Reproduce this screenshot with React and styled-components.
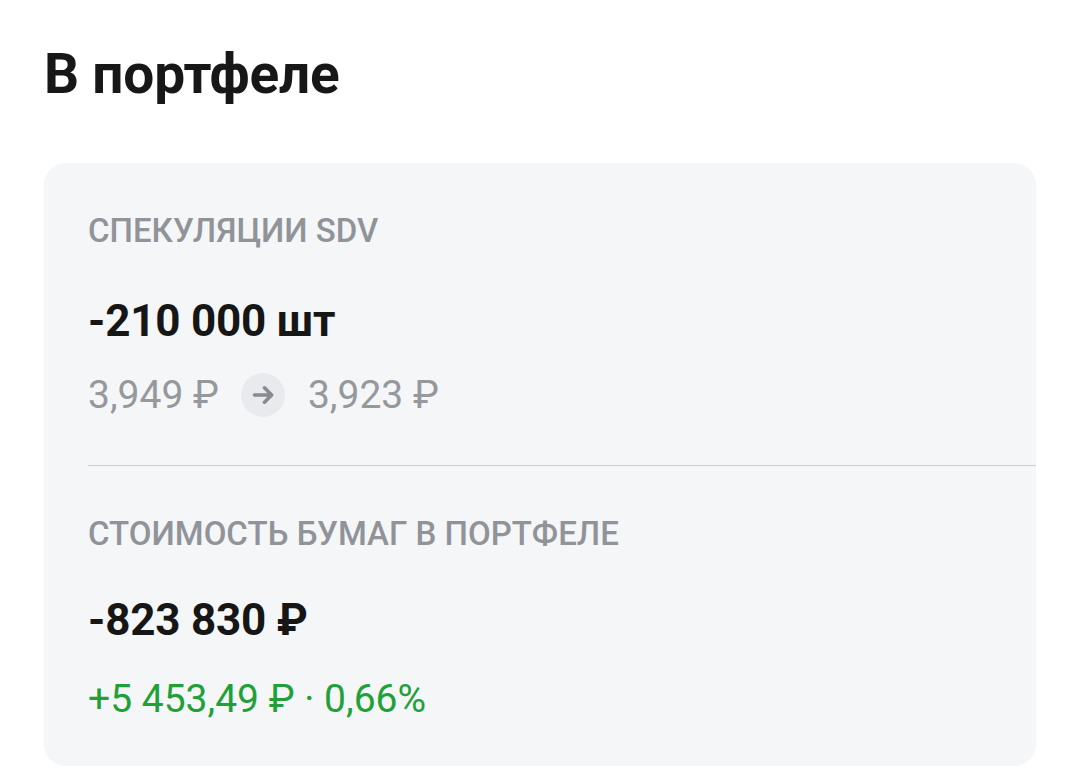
import React from "react";
import styled, { createGlobalStyle } from "styled-components";

const GlobalStyle = createGlobalStyle`
  html, body {
    margin: 0;
    padding: 0;
    background: #ffffff;
  }
  body {
    font-family: Roboto, "Noto Sans", "Liberation Sans", sans-serif;
    -webkit-font-smoothing: antialiased;
  }
`;

const Page = styled.div`
  width: 1080px;
  padding: 44px 44px 0 44px;
  box-sizing: border-box;
`;

const Title = styled.h1`
  margin: 0;
  font-size: 55px;
  line-height: 60px;
  font-weight: 700;
  color: #171717;
  letter-spacing: -0.2px;
`;

const Card = styled.section`
  margin-top: 59px;
  width: 992px;
  box-sizing: border-box;
  background: #f5f6f8;
  border-radius: 22px;
  padding: 48px 0 45px 44px;
  display: flex;
  flex-direction: column;
`;

const Block = styled.div`
  display: flex;
  flex-direction: column;
`;

const Label = styled.div`
  font-size: 33px;
  line-height: 40px;
  font-weight: 500;
  color: #909398;
  letter-spacing: 0;
  text-transform: uppercase;
`;

const Amount = styled.div`
  margin-top: ${(p) => p.$gap}px;
  font-size: 44px;
  line-height: 52px;
  font-weight: 700;
  color: #161616;
  letter-spacing: -0.2px;
`;

const PriceRow = styled.div`
  margin-top: 26px;
  display: flex;
  align-items: center;
  height: 44px;
`;

const Price = styled.span`
  font-size: 39px;
  line-height: 44px;
  font-weight: 400;
  color: #95989d;
`;

const ArrowBadge = styled.span`
  width: 44px;
  height: 44px;
  border-radius: 50%;
  background: #e9eaed;
  display: inline-flex;
  align-items: center;
  justify-content: center;
  margin: 0 23px 0 22px;
`;

const Divider = styled.hr`
  margin: 48px 0 48px 0;
  border: none;
  height: 1px;
  background: #cdced1;
`;

const Change = styled.div`
  margin-top: 31px;
  font-size: 39px;
  line-height: 44px;
  font-weight: 400;
  color: #21a038;
`;

const Arrow = () => (
  <svg width="22" height="22" viewBox="0 0 22 22" fill="none">
    <path
      d="M2.5 11H19M12.5 3.8L19.6 11L12.5 18.2"
      stroke="#878a90"
      strokeWidth="3.6"
      strokeLinecap="round"
      strokeLinejoin="round"
    />
  </svg>
);

export default function App() {
  return (
    <>
      <GlobalStyle />
      <Page>
        <Title>В портфеле</Title>
        <Card>
          <Block>
            <Label>Спекуляции SDV</Label>
            <Amount $gap={44}>-210 000 шт</Amount>
            <PriceRow>
              <Price>3,949 ₽</Price>
              <ArrowBadge>
                <Arrow />
              </ArrowBadge>
              <Price>3,923 ₽</Price>
            </PriceRow>
          </Block>
          <Divider />
          <Block>
            <Label>Стоимость бумаг в портфеле</Label>
            <Amount $gap={40}>-823 830 ₽</Amount>
            <Change>+5 453,49 ₽ · 0,66%</Change>
          </Block>
        </Card>
      </Page>
    </>
  );
}
